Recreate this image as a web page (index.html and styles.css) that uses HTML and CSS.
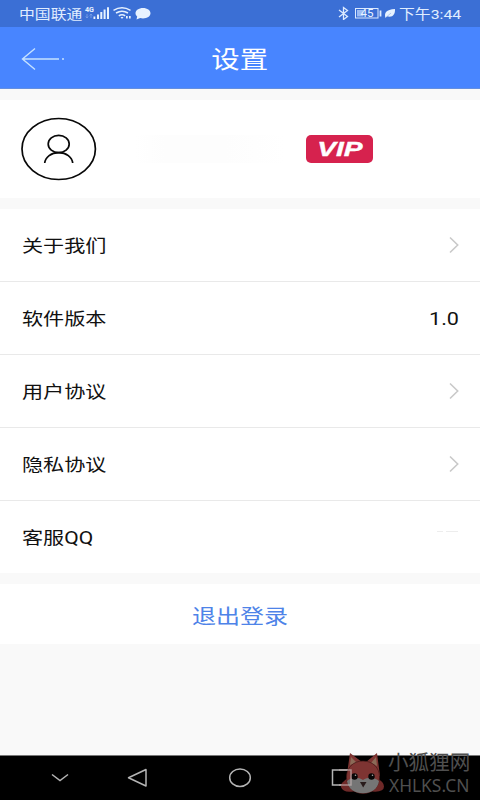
FILE: index.html
```html
<!DOCTYPE html>
<html lang="zh-CN">
<head>
<meta charset="utf-8">
<title>设置</title>
<link rel="stylesheet" href="styles.css">
</head>
<body>
<div class="screen">
  <div class="status">
    <span class="wide carrier">中国联通</span>
    <svg class="signals" width="68" height="20" viewBox="0 0 68 20" fill="#e7f2ff">
      <text class="net" x="2" y="11.500" textLength="9" lengthAdjust="spacingAndGlyphs">4G</text>
      <path d="M4 14v4m-1.200-1.500L4 18l1.200-1.500M8 18v-4m-1.200 1.500L8 14l1.200 1.500" fill="none" stroke="#7fa3e8" stroke-width=".8"/>
      <path d="M10.500 16.500h1.800V19h-1.800zM14 14.500h2V19h-2zM17.300 12h2v7h-2zM20.600 9.500h2V19h-2zM24 7.300h2V19h-2z"/>
      <g fill="none" stroke="#e7f2ff" stroke-width="1.500"><path d="M30.500 10.300q8.500-5 17 0M33 13q6-3.500 12 0M35.800 15.800q3.200-2 6.400 0"/></g>
      <path d="M37.500 17h3l-1.500 1.900zM43 16h1.700v2.500H43zM46 16h1.700v2.500H46z"/>
      <path d="M60 8c4.300 0 7.500 2.300 7.500 5.200s-3.200 5.200-7.500 5.200c-1 0-2-.1-2.800-.4L53.500 19.500l.7-3c-1-.9-1.700-2-1.700-3.300C52.500 10.300 55.700 8 60 8z"/>
    </svg>
    <div class="status-right">
      <svg width="62" height="20" viewBox="0 0 62 20" fill="none" stroke="#dceaff">
        <path d="M2 10l8.500 6.500-4 3V7.500l4 3L2 17" stroke-width="1.300"/>
        <rect x="18.500" y="8.500" width="22.500" height="9.500" stroke-width="1"/>
        <path d="M20 10h6.500v6.500H20z" fill="#9dbcf4" stroke="none"/>
        <text class="battery" x="23.500" y="17" textLength="13" lengthAdjust="spacingAndGlyphs">45</text>
        <path d="M43.500 10.500v6" stroke-width="1.800"/>
        <path d="M48.500 18c-1.500-5 .5-8.500 9.500-9 .3 5.500-2.500 9-8 7.300z" fill="#e7f2ff" stroke="none"/>
        <path d="M50 16.500l4-3.500" stroke="#8babe9" stroke-width=".6"/>
      </svg>
      <span class="wide clock">下午3:44</span>
    </div>
  </div>
  <header class="header">
    <svg class="back" width="44" height="24" viewBox="0 0 44 24" fill="none" stroke="#c5e2ff" stroke-width="1.400"><path d="M14 1.500L1.500 12 14 22.500M1.500 12H38M41 12h2"/></svg>
    <h1 class="wide title">设置</h1>
  </header>
  <section class="profile">
    <svg class="avatar" width="76" height="64" viewBox="0 0 76 64" fill="none" stroke="#080808" stroke-width="1.700"><ellipse cx="37.700" cy="32" rx="36.700" ry="30.500"/><ellipse cx="37.700" cy="27" rx="10.500" ry="8.700"/><path d="M23.700 46C24.500 40 30 35.700 37.700 35.700S51 40 51.700 46"/></svg>
    <span class="smudge"></span>
    <span class="vip"><span class="vip-text">VIP</span></span>
  </section>
  <main class="list">
    <div class="row"><span class="wide label">关于我们</span><svg class="chevron" width="10" height="18" viewBox="0 0 10 18"><path d="M1 1.500L8.700 9 1 16.500"/></svg></div>
    <div class="row"><span class="wide label">软件版本</span><span class="wide value">1.0</span></div>
    <div class="row"><span class="wide label">用户协议</span><svg class="chevron" width="10" height="18" viewBox="0 0 10 18"><path d="M1 1.500L8.700 9 1 16.500"/></svg></div>
    <div class="row"><span class="wide label">隐私协议</span><svg class="chevron" width="10" height="18" viewBox="0 0 10 18"><path d="M1 1.500L8.700 9 1 16.500"/></svg></div>
    <div class="row"><span class="wide label">客服QQ</span><svg class="trace" width="22" height="14" viewBox="0 0 22 14"><path d="M0 1.500h6M9 1.500h12" stroke="#ededed"/></svg></div>
  </main>
  <button class="logout"><span class="wide">退出登录</span></button>
  <nav class="nav">
    <svg width="480" height="45" viewBox="0 0 480 45" fill="none" stroke="#b5b5b5" stroke-width="1.500">
      <path d="M52 19.500l8 6 8-6"/>
      <path d="M146 14.500v16.500l-17.500-8.200z" stroke-linejoin="round"/>
      <ellipse cx="240" cy="22.700" rx="10.300" ry="8.800"/>
      <rect x="332.500" y="15" width="18.500" height="15"/>
    </svg>
  </nav>
  <div class="watermark">
    <svg width="48" height="46" viewBox="0 0 48 46">
      <path d="M9 27Q1 32 2 36q2 6 12 4.500h19q12 1 12-5 0-5-8-8.500z" fill="#6e2928"/>
      <path d="M8 23L11 2l12 9 4 0L38 2l3 23z" fill="#7e3432"/>
      <path d="M11 14l1-8 6 6zM32 12l5-6 1 9z" fill="#8b6a57"/>
      <path d="M24 10c10 0 16.500 7 16.500 16S34 42.500 24 42.500 7.500 35 7.500 26 14 10 24 10z" fill="#7e3432" stroke="#421817" stroke-width=".7"/>
      <path d="M8 30c5-4 11-4 16-1 5-3 11-3 16 1-1 8-8 12.300-16 12.300S9 38 8 30z" fill="#757575"/>
      <circle cx="15.500" cy="25.500" r="3.200" fill="#080606"/><circle cx="32.500" cy="25.500" r="3.200" fill="#080606"/>
      <circle cx="16.500" cy="24.300" r=".8" fill="#aaa"/><circle cx="33.500" cy="24.300" r=".8" fill="#aaa"/>
      <path d="M21 31h6.500L24.200 36.500z" fill="#291b1b"/>
      <path d="M0 19h12v15H0" fill="none" stroke="#c3b4b3" stroke-width="1.500" opacity=".7"/>
    </svg>
    <div class="mark-text"><span class="mark-cn">小狐狸网</span><span class="mark-en">XHLKS.CN</span></div>
  </div>
</div>
</body>
</html>
```
FILE: styles.css
```css
* { box-sizing: border-box; }
body { margin: 0; font-family: Roboto, "Noto Sans CJK SC", sans-serif; color: #111; }
svg { display: block; flex: none; }
.screen { position: relative; width: 480px; height: 800px; overflow: hidden; background: #f9f9f9; display: flex; flex-direction: column; }
.wide { display: inline-block; transform: scaleX(1.2); transform-origin: left center; white-space: nowrap; }
.status { height: 27px; flex: none; background: #3b6fd5; color: #e0edff; display: flex; align-items: flex-start; padding-left: 19px; line-height: 29px; }
.carrier { width: 64px; font-size: 13.200px; }
.net { font: bold 7px Roboto, sans-serif; }
.status-right { display: flex; margin-left: auto; width: 143px; }
.battery { font: 10px Roboto, sans-serif; fill: #eaf3ff; stroke: none; }
.clock { font-size: 13.200px; }
.header { height: 62px; flex: none; background: #4885ff; display: grid; grid-template-columns: 1fr auto 1fr; align-items: center; border-bottom: 1px solid #648fe0; }
.back { margin-left: 21px; margin-top: 3px; }
.title { margin: 4px 0 0; color: #fff; font-size: 23.700px; font-weight: 400; line-height: 36px; transform-origin: center; }
.profile { height: 98px; flex: none; margin: 11px 0; background: #fff; display: flex; align-items: center; padding-left: 21px; }
.smudge { width: 150px; height: 28px; margin-left: 38px; background: linear-gradient(90deg, #fff, #fdfdfd 20%, #fdfdfd 60%, #fff); }
.vip { width: 67px; height: 28px; margin-left: 21px; border-radius: 5px; background: #d6224e; display: flex; align-items: center; justify-content: center; }
.vip-text { color: #fff; font: italic bold 21px/28px "Liberation Sans", sans-serif; -webkit-text-stroke: .4px #fff; transform: scaleX(1.340); }
.list { background: #fff; flex: none; }
.row { height: 73px; display: flex; align-items: center; justify-content: space-between; padding: 0 21px 0 22px; border-bottom: 1px solid #e9e9e9; }
.row:last-child { height: 72px; border-bottom: 0; }
.label { font-size: 17.600px; line-height: 26px; margin-top: 1px; }
.value { font-size: 18px; transform-origin: right center; }
.chevron { fill: none; stroke: #c9c9c9; stroke-width: 1.600; }
.logout { height: 60px; flex: none; margin-top: 11px; border: 0; background: #fff; color: #4e83e8; font: 20px/62px Roboto, "Noto Sans CJK SC", sans-serif; padding: 2px 0 0; }
.logout .wide { transform-origin: center; }
.nav { height: 45px; flex: none; margin-top: auto; background: #000; border-top: 1px solid #777; }
.nav svg { margin-top: -1px; }
.watermark { position: absolute; left: 339px; top: 751px; display: flex; }
.mark-text { display: flex; flex-direction: column; color: #4f4f4f; padding-left: 1px; white-space: nowrap; }
.mark-cn { font-size: 20.600px; line-height: 25px; }
.mark-en { font: 18px/18px "Noto Sans", sans-serif; padding-left: 1px; transform: scaleX(.965); transform-origin: left; }
```
